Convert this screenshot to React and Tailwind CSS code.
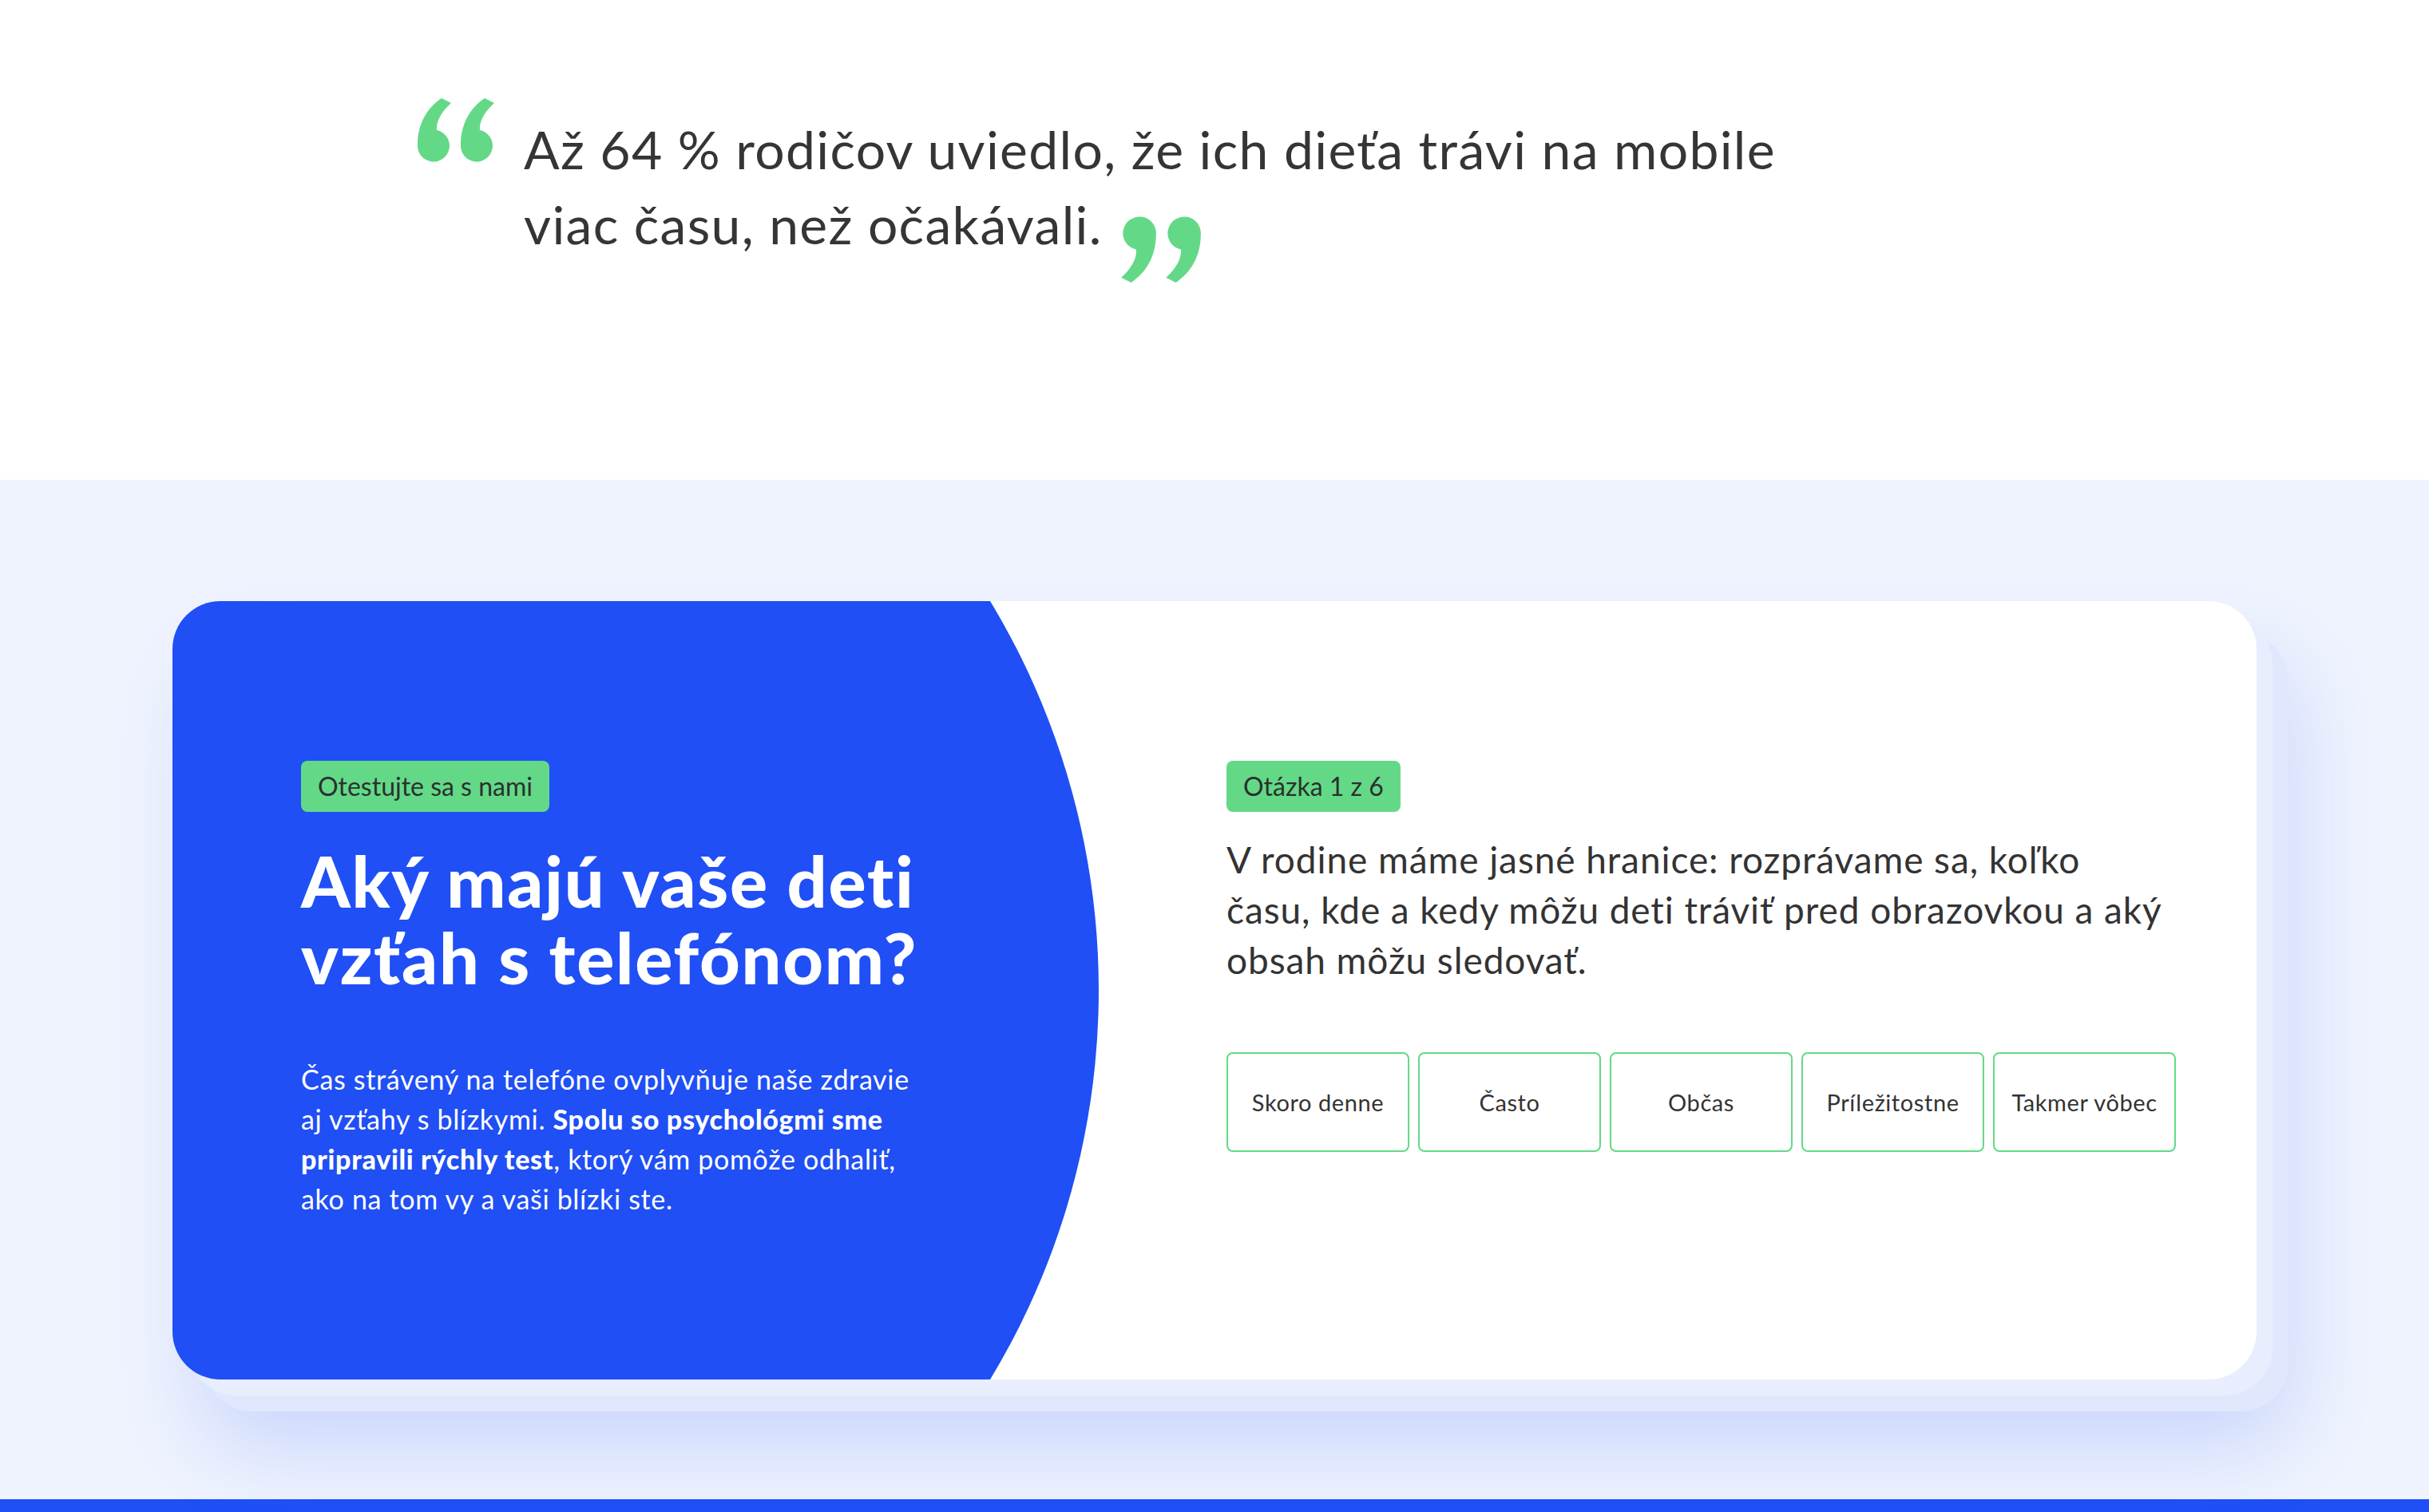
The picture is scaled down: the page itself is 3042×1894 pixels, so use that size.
import React from "react";

function QuoteMark({ className }) {
    return (
        <svg viewBox="0 0 97 80" className={className} fill="#63d987">
            <path d="M0 58 C0 32 12 12 30 0 L42 6 C30 17 23 29 24 40 A20 20 0 1 1 0 58 Z" />
            <path d="M54 58 C54 32 66 12 84 0 L96 6 C84 17 77 29 78 40 A20 20 0 1 1 54 58 Z" />
        </svg>
    );
}

const answers = ["Skoro denne", "Často", "Občas", "Príležitostne", "Takmer vôbec"];

export default function App() {
    return (
        <div className="min-h-screen bg-white font-['Lato','Noto_Sans',sans-serif]">
            {/* quote */}
            <section className="h-[601px] bg-white">
                <div className="mx-auto flex w-[1996px] pt-[123px]">
                    <QuoteMark className="h-[80px] w-[97px] shrink-0" />
                    <p className="ml-[36px] mt-[17px] w-[1640px] text-[66px] leading-[94px] tracking-[0.02em] text-[#353535]">
                        Až 64 % rodičov uviedlo, že ich dieťa trávi na mobile viac času, než očakávali.
                        <QuoteMark className="ml-[22px] inline-block h-[83px] w-[101px] rotate-180 align-[-48px]" />
                    </p>
                </div>
            </section>

            {/* quiz */}
            <section className="bg-[#eff3fe] pt-[152px] pb-[150px]">
                <div className="relative mx-auto h-[975px] w-[2610px]">
                    <div className="absolute inset-0 translate-x-[40px] translate-y-[40px] rounded-[60px] bg-[#e1e8fd] shadow-[0_40px_110px_rgba(40,90,245,0.20)]"></div>
                    <div className="absolute inset-0 translate-x-[20px] translate-y-[20px] rounded-[60px] bg-[#e8eefe]"></div>

                    <div className="relative flex h-full overflow-hidden rounded-[60px] bg-white">
                        <div className="w-[1160px] shrink-0 bg-[#1f4ff5] pl-[161px] pt-[200px] [clip-path:circle(942px_at_218px_50%)]">
                            <span className="inline-flex h-[64px] items-center rounded-[8px] bg-[#63d987] px-[21px] text-[32px] text-[#2b302e]">
                                Otestujte sa s nami
                            </span>
                            <h1 className="mt-[38px] text-[88px] font-black leading-[96px] tracking-[0.02em] text-white">
                                Aký majú vaše deti
                                <br />
                                vzťah s telefónom?
                            </h1>
                            <p className="mt-[80px] w-[795px] text-[34px] leading-[50px] tracking-[0.02em] text-white">
                                Čas strávený na telefóne ovplyvňuje naše zdravie aj vzťahy s blízkymi.{" "}
                                <strong className="font-black">Spolu so psychológmi sme pripravili rýchly test</strong>, ktorý vám pomôže odhaliť, ako na tom vy a vaši blízki ste.
                            </p>
                        </div>

                        <div className="flex-1 pl-[160px] pr-[100px] pt-[200px]">
                            <span className="inline-flex h-[64px] items-center rounded-[8px] bg-[#63d987] px-[21px] text-[32px] text-[#2b302e]">
                                Otázka 1 z 6
                            </span>
                            <p className="mt-[28px] max-w-[1220px] text-[46px] leading-[63px] tracking-[0.02em] text-[#333333]">
                                V rodine máme jasné hranice: rozprávame sa, koľko
                                <br />
                                času, kde a kedy môžu deti tráviť pred obrazovkou a aký
                                <br />
                                obsah môžu sledovať.
                            </p>
                            <div className="mt-[84px] grid w-[1189px] grid-cols-5 gap-[11px]">
                                {answers.map((a) => (
                                    <button
                                        key={a}
                                        className="flex h-[125px] items-center justify-center rounded-[8px] border-2 border-[#63d987] bg-white text-[29px] tracking-[0.02em] text-[#333333]"
                                    >
                                        {a}
                                    </button>
                                ))}
                            </div>
                        </div>
                    </div>
                </div>
            </section>

            <div className="h-[16px] bg-[#1e50f6]"></div>
        </div>
    );
}
